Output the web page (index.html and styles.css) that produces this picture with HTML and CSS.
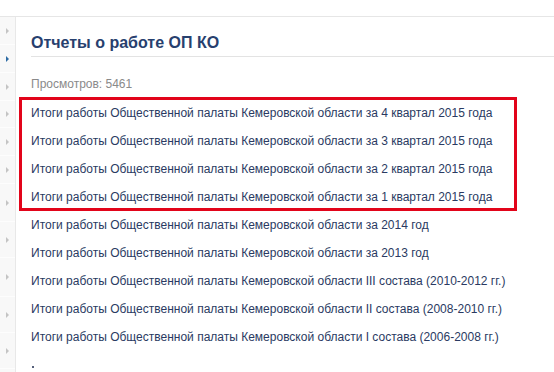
FILE: index.html
```html
<!DOCTYPE html>
<html lang="ru">
<head>
<meta charset="utf-8">
<title>Отчеты о работе ОП КО</title>
<link rel="stylesheet" href="styles.css">
</head>
<body>
<div class="topbar"></div>
<div class="layout">
  <aside class="sidebar">
    <div class="srow h28"><span class="arrow"></span></div>
    <div class="srow h28"><span class="arrow active"></span></div>
    <div class="srow h28"><span class="arrow"></span></div>
    <div class="srow h27"><span class="arrow"></span></div>
    <div class="srow h28"><span class="arrow"></span></div>
    <div class="srow h28"><span class="arrow"></span></div>
    <div class="srow h38"><span class="arrow"></span></div>
    <div class="srow h36"><span class="arrow"></span></div>
    <div class="srow h39"><span class="arrow"></span></div>
    <div class="srow h36"><span class="arrow"></span></div>
    <div class="srow h36"><span class="arrow"></span></div>
  </aside>
  <main class="content">
    <h1 class="title">Отчеты о работе ОП КО</h1>
    <div class="views">Просмотров: 5461</div>
    <div class="highlight">
      <a class="item first" href="#">Итоги работы Общественной палаты Кемеровской области за 4 квартал 2015 года</a>
      <a class="item" href="#">Итоги работы Общественной палаты Кемеровской области за 3 квартал 2015 года</a>
      <a class="item" href="#">Итоги работы Общественной палаты Кемеровской области за 2 квартал 2015 года</a>
      <a class="item last" href="#">Итоги работы Общественной палаты Кемеровской области за 1 квартал 2015 года</a>
    </div>
    <a class="item" href="#">Итоги работы Общественной палаты Кемеровской области за 2014 год</a>
    <a class="item" href="#">Итоги работы Общественной палаты Кемеровской области за 2013 год</a>
    <a class="item" href="#">Итоги работы Общественной палаты Кемеровской области III состава (2010-2012 гг.)</a>
    <a class="item" href="#">Итоги работы Общественной палаты Кемеровской области II состава (2008-2010 гг.)</a>
    <a class="item" href="#">Итоги работы Общественной палаты Кемеровской области I состава (2006-2008 гг.)</a>
    <div class="more"><span class="dot"></span></div>
  </main>
</div>
</body>
</html>
```

FILE: styles.css
```css
html, body {
  margin: 0;
  padding: 0;
  background: #fff;
  font-family: "Liberation Sans", Arial, sans-serif;
  overflow: hidden;
}
.topbar {
  height: 16px;
  border-bottom: 1px solid #e6e6e6;
}
.layout {
  display: flex;
  align-items: stretch;
  min-height: 360px;
}
.sidebar {
  width: 15px;
  flex: none;
  background: #f8f8f8;
  border-right: 1px solid #e8e8e8;
  display: flex;
  flex-direction: column;
}
.srow {
  flex: none;
  display: flex;
  align-items: center;
  padding-left: 6px;
  border-bottom: 1px solid #fdfdfd;
  box-sizing: border-box;
}
.h27 { height: 27px; }
.h28 { height: 28px; }
.h36 { height: 36px; }
.h38 { height: 38px; }
.h39 { height: 39px; }
.arrow {
  width: 0;
  height: 0;
  border-top: 3px solid transparent;
  border-bottom: 3px solid transparent;
  border-left: 3px solid #c4c4c4;
}
.arrow.active {
  border-left-color: #2c6aa3;
}
.content {
  flex: 1;
  padding-left: 15px;
  min-width: 0;
}
.title {
  margin: 16px 0 0 0;
  font-size: 16px;
  line-height: 20px;
  font-weight: bold;
  color: #27406e;
  padding-bottom: 3px;
  border-bottom: 1px solid #e3e3e3;
}
.views {
  margin-top: 19px;
  font-size: 12px;
  line-height: 16px;
  color: #8a8a8a;
}
.highlight {
  margin: 5px 0 0 -12px;
  width: 483px;
  padding-left: 9px;
  border: 3px solid #e2041a;
}
.item {
  display: block;
  font-size: 12px;
  line-height: 28px;
  color: #2a3a62;
  text-decoration: none;
  white-space: nowrap;
}
.item.first { margin-top: -1px; }
.item.last { margin-bottom: -3px; }
.more {
  height: 28px;
  position: relative;
}
.dot {
  position: absolute;
  left: 1px;
  top: 15px;
  width: 2px;
  height: 2px;
  background: #55607a;
}
```
